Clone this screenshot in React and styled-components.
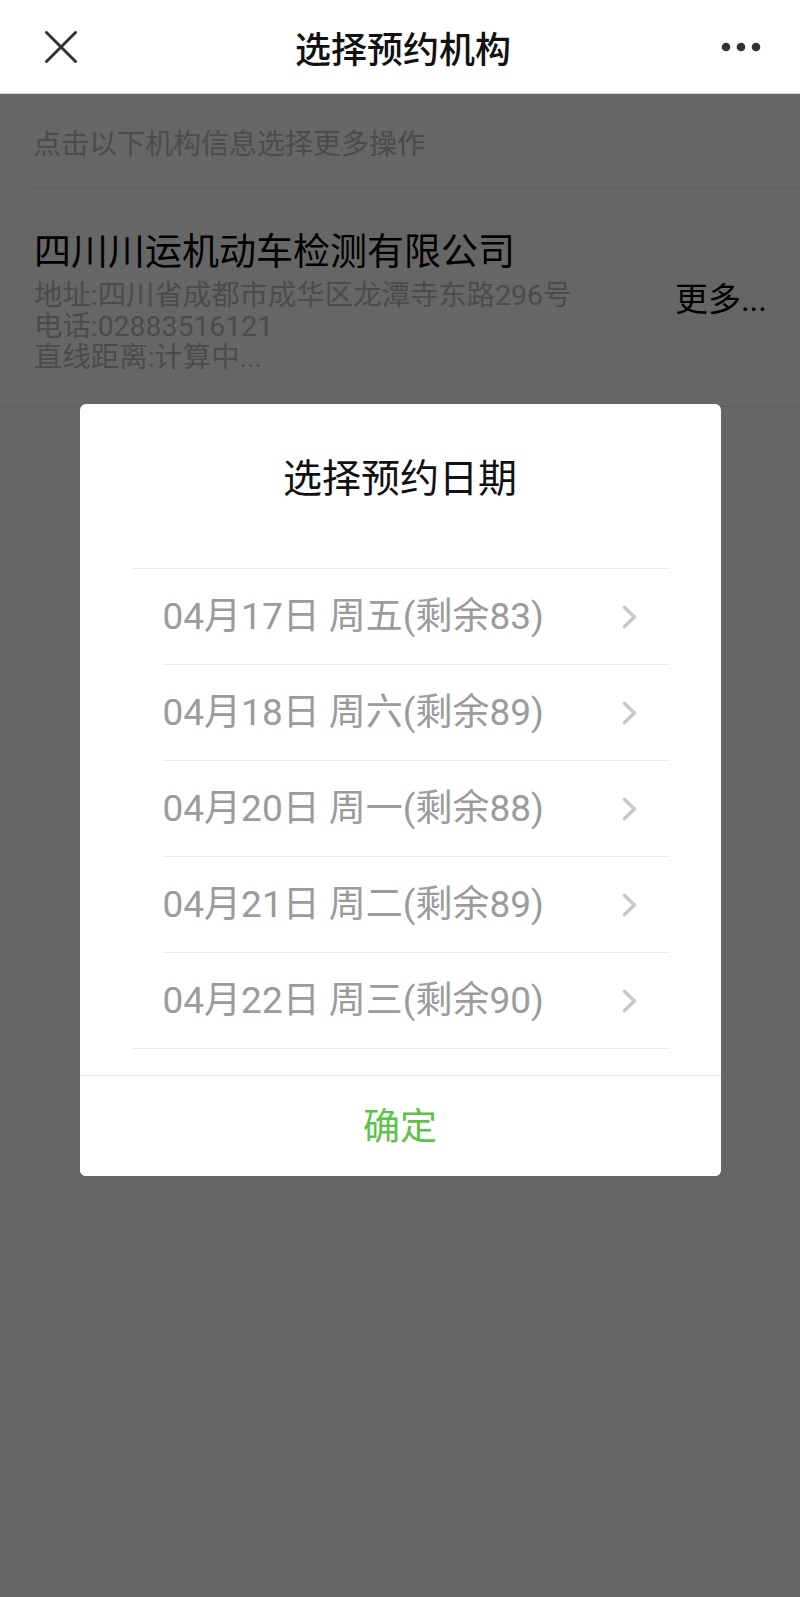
import styled, { createGlobalStyle } from 'styled-components';

const GlobalStyle = createGlobalStyle`
  html, body {
    margin: 0;
    padding: 0;
    background: #fff;
  }
  body {
    font-family: "Roboto", "Noto Sans CJK SC", sans-serif;
    -webkit-font-smoothing: antialiased;
  }
`;

const Page = styled.div`
  display: flex;
  flex-direction: column;
  min-height: 100vh;
`;

const Header = styled.header`
  display: grid;
  grid-template-columns: 1fr auto 1fr;
  align-items: center;
  height: 93px;
  padding: 0 39px 0 45px;
  background: #fff;
  border-bottom: 1px solid #d6d6d6;
`;

const HeaderTitle = styled.h1`
  margin: 0;
  font-family: "Noto Sans CJK SC", sans-serif;
  font-size: 36px;
  font-weight: 500;
  line-height: 48px;
  color: #111;
`;

const IconSlot = styled.div`
  display: flex;
  justify-content: ${(p) => (p.$right ? 'flex-end' : 'flex-start')};
  align-items: center;
`;

const Body = styled.main`
  position: relative;
  flex: 1;
  background: #fff;
`;

const Hint = styled.div`
  margin-left: 33px;
  padding: 31px 0 23px;
  font-size: 28px;
  line-height: 40px;
  color: #bdbdbd;
  border-bottom: 1px solid #e8e8e8;
`;

const OrgItem = styled.div`
  display: flex;
  align-items: center;
  justify-content: space-between;
  padding: 38px 33px 33px 34px;
  border-bottom: 1px solid #e8e8e8;
`;

const OrgInfo = styled.div`
  display: flex;
  flex-direction: column;
`;

const OrgName = styled.div`
  font-family: "Noto Sans CJK SC", sans-serif;
  font-size: 37px;
  line-height: 44px;
  color: #000;
`;

const OrgLines = styled.div`
  margin-top: 9px;
  font-size: 28.4px;
  line-height: 31px;
  color: #bdbdbd;
`;

const MoreLink = styled.div`
  font-size: 33px;
  line-height: 44px;
  color: #000;
`;

const Overlay = styled.div`
  position: absolute;
  inset: 0;
  display: flex;
  justify-content: center;
  align-items: flex-start;
  padding-top: 310px;
  background: rgba(0, 0, 0, 0.6);
`;

const Dialog = styled.div`
  width: 641px;
  background: #fff;
  border-radius: 6px;
  overflow: hidden;
`;

const DialogTitle = styled.h2`
  margin: 0;
  padding-top: 45px;
  font-family: "Noto Sans CJK SC", sans-serif;
  font-size: 39px;
  font-weight: 400;
  line-height: 52px;
  text-align: center;
  color: #111;
`;

const DateList = styled.ul`
  list-style: none;
  margin: 67px 51px 0 52px;
  padding: 0;
  border-top: 1px solid #ebebeb;
  border-bottom: 1px solid #ebebeb;
`;

const DateRow = styled.li`
  display: flex;
  align-items: center;
  justify-content: space-between;
  height: 95px;
  margin-left: 31px;
  padding-right: 33px;
  font-size: 37px;
  color: #9b9b9b;
  border-bottom: ${(p) => (p.$last ? 'none' : '1px solid #ebebeb')};
`;

const DateText = styled.span`
  line-height: 48px;
`;

const ConfirmButton = styled.button`
  display: block;
  width: 100%;
  height: 101px;
  margin-top: 26px;
  padding: 0 0 4px;
  border: none;
  border-top: 1px solid #e5e5e5;
  background: #fff;
  font-family: "Noto Sans CJK SC", sans-serif;
  font-size: 37px;
  line-height: 96px;
  color: #5ec24a;
  cursor: pointer;
`;

const dates = [
  '04月17日 周五(剩余83)',
  '04月18日 周六(剩余89)',
  '04月20日 周一(剩余88)',
  '04月21日 周二(剩余89)',
  '04月22日 周三(剩余90)',
];

const CloseIcon = () => (
  <svg width="32" height="32" viewBox="0 0 32 32">
    <path d="M1.5 1.5 L30.5 30.5 M30.5 1.5 L1.5 30.5" stroke="#333" strokeWidth="3" strokeLinecap="round" />
  </svg>
);

const MoreIcon = () => (
  <svg width="40" height="10" viewBox="0 0 40 10">
    <circle cx="5" cy="5" r="4.3" fill="#333" />
    <circle cx="20" cy="5" r="4.3" fill="#333" />
    <circle cx="35" cy="5" r="4.3" fill="#333" />
  </svg>
);

const Chevron = () => (
  <svg width="15" height="24" viewBox="0 0 15 24">
    <polyline points="2.5,2.5 12.5,12 2.5,21.5" fill="none" stroke="#c7c7cc" strokeWidth="3.5" strokeLinejoin="round" strokeLinecap="round" />
  </svg>
);

const App = () => {
  return (
    <Page>
      <GlobalStyle />
      <Header>
        <IconSlot>
          <CloseIcon />
        </IconSlot>
        <HeaderTitle>选择预约机构</HeaderTitle>
        <IconSlot $right>
          <MoreIcon />
        </IconSlot>
      </Header>

      <Body>
        <Hint>点击以下机构信息选择更多操作</Hint>
        <OrgItem>
          <OrgInfo>
            <OrgName>四川川运机动车检测有限公司</OrgName>
            <OrgLines>
              <div>地址:四川省成都市成华区龙潭寺东路296号</div>
              <div>电话:02883516121</div>
              <div>直线距离:计算中...</div>
            </OrgLines>
          </OrgInfo>
          <MoreLink>更多...</MoreLink>
        </OrgItem>

        <Overlay>
          <Dialog>
            <DialogTitle>选择预约日期</DialogTitle>
            <DateList>
              {dates.map((d, i) => (
                <DateRow key={d} $last={i === dates.length - 1}>
                  <DateText>{d}</DateText>
                  <Chevron />
                </DateRow>
              ))}
            </DateList>
            <ConfirmButton>确定</ConfirmButton>
          </Dialog>
        </Overlay>
      </Body>
    </Page>
  );
};

export default App;
